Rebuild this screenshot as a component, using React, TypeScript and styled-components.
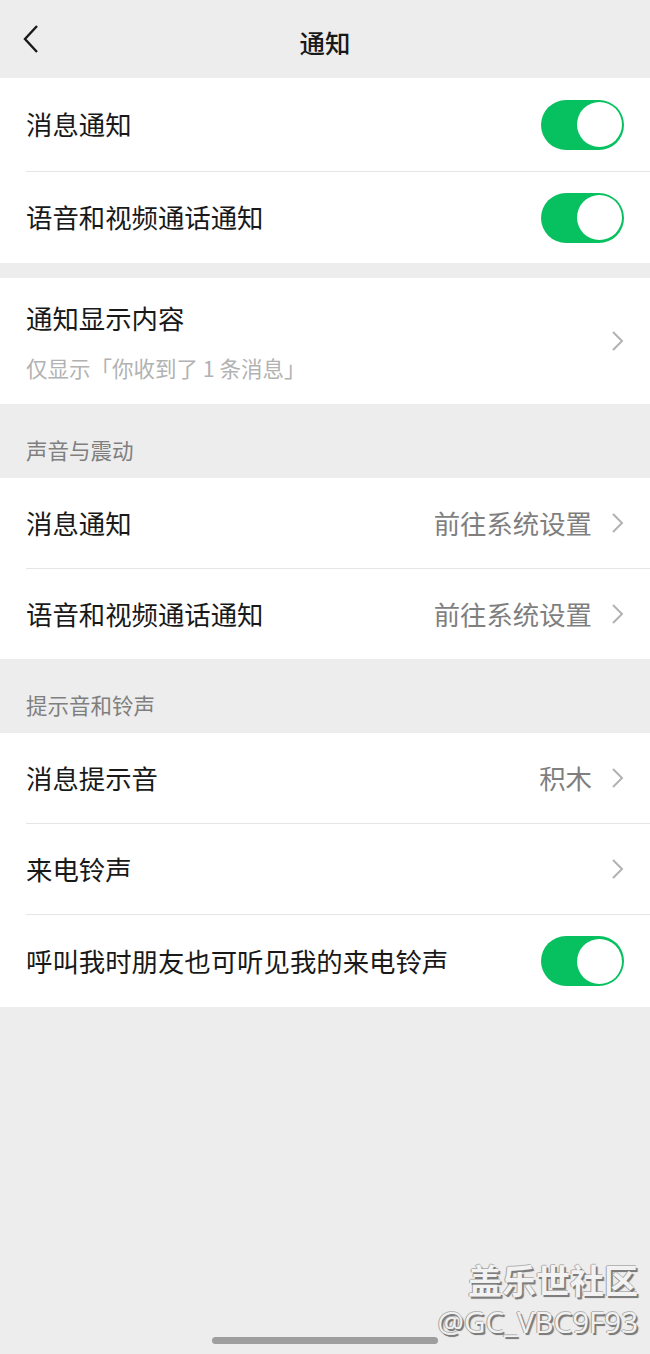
import React from "react";
import styled, { createGlobalStyle } from "styled-components";

const GlobalStyle = createGlobalStyle`
  html, body {
    margin: 0;
    padding: 0;
    background: #ededed;
  }
  body {
    font-family: "Noto Sans CJK SC", "Noto Sans", sans-serif;
    -webkit-font-smoothing: antialiased;
  }
`;

const Page = styled.div`
  position: relative;
  width: 650px;
  height: 1354px;
  background: #ededed;
  display: flex;
  flex-direction: column;
  overflow: hidden;
`;

const NavBar = styled.div`
  height: 78px;
  flex-shrink: 0;
  display: grid;
  grid-template-columns: 80px 1fr 80px;
  align-items: center;
`;

const BackButton = styled.div`
  display: flex;
  align-items: center;
  padding-left: 22px;
  height: 100%;
`;

const NavTitle = styled.div`
  text-align: center;
  font-size: 25.5px;
  font-weight: 500;
  color: #191919;
  padding-top: 4px;
`;

const Card = styled.div<{ $mt?: number }>`
  background: #ffffff;
  margin-top: ${(p) => p.$mt ?? 0}px;
  display: flex;
  flex-direction: column;
`;

const Row = styled.div<{ $h: number }>`
  height: ${(p) => p.$h}px;
  display: flex;
  align-items: center;
  padding: 0 26px;
  box-sizing: border-box;
`;

const Divider = styled.div`
  height: 1px;
  background: #e6e6e6;
  margin-left: 26px;
`;

const Label = styled.div`
  flex: 1;
  font-size: 26.4px;
  color: #191919;
  line-height: 1;
`;

const Value = styled.div`
  font-size: 26.4px;
  color: #7f7f7f;
  line-height: 1;
  margin-right: 16px;
`;

const TextStack = styled.div`
  flex: 1;
  display: flex;
  flex-direction: column;
  gap: 26px;
  padding-top: 2px;
`;

const SubLabel = styled.div`
  font-size: 21.5px;
  color: #b2b2b2;
  line-height: 1;
`;

const SectionHeader = styled.div`
  height: 74px;
  box-sizing: border-box;
  padding: 35px 26px 0;
  font-size: 21.5px;
  color: #7f7f7f;
  line-height: 1;
`;

const Switch = styled.div<{ $on: boolean }>`
  position: relative;
  width: 83px;
  height: 50px;
  border-radius: 25px;
  background: ${(p) => (p.$on ? "#07c160" : "#e5e5e5")};
  flex-shrink: 0;
`;

const Knob = styled.div<{ $on: boolean }>`
  position: absolute;
  top: 2.5px;
  ${(p) => (p.$on ? "right: 2px;" : "left: 2px;")}
  width: 45px;
  height: 45px;
  border-radius: 50%;
  background: #ffffff;
`;

const ChevronBox = styled.div`
  width: 16px;
  display: flex;
  align-items: center;
  justify-content: flex-end;
  flex-shrink: 0;
`;

const Watermark = styled.div`
  position: absolute;
  right: 12px;
  bottom: 18px;
  display: flex;
  flex-direction: column;
  align-items: flex-end;
  color: #f2f2f2;
  text-shadow: 1.5px 1.5px 0 #7d7d7d, -1px 0 0 #a5a5a5, 0 -1px 0 #b5b5b5, 2px 2px 1px #8f8f8f;
  line-height: 1;
`;

const WatermarkTitle = styled.div`
  font-size: 34px;
  font-weight: 700;
  margin-bottom: 10px;
`;

const WatermarkId = styled.div`
  font-family: "Open Sans", "Noto Sans", sans-serif;
  font-size: 29.5px;
`;

const HomeIndicator = styled.div`
  position: absolute;
  left: 212px;
  bottom: 10px;
  width: 226px;
  height: 7px;
  border-radius: 4px;
  background: #9e9e9e;
`;

const Chevron = () => (
  <ChevronBox>
    <svg width="14" height="22" viewBox="0 0 14 22">
      <path d="M3 2 L12 11 L3 20" fill="none" stroke="#b2b2b2" strokeWidth="2" />
    </svg>
  </ChevronBox>
);

const Toggle = ({ on = true }: { on?: boolean }) => (
  <Switch $on={on}>
    <Knob $on={on} />
  </Switch>
);

export default function App() {
  return (
    <Page>
      <GlobalStyle />
      <NavBar>
        <BackButton>
          <svg width="18" height="30" viewBox="0 0 18 30">
            <path d="M15 2 L3 15 L15 28" fill="none" stroke="#191919" strokeWidth="2.4" />
          </svg>
        </BackButton>
        <NavTitle>通知</NavTitle>
        <div />
      </NavBar>

      <Card>
        <Row $h={93}>
          <Label>消息通知</Label>
          <Toggle />
        </Row>
        <Divider />
        <Row $h={91}>
          <Label>语音和视频通话通知</Label>
          <Toggle />
        </Row>
      </Card>

      <Card $mt={15}>
        <Row $h={126}>
          <TextStack>
            <Label>通知显示内容</Label>
            <SubLabel>仅显示「你收到了 1 条消息」</SubLabel>
          </TextStack>
          <Chevron />
        </Row>
      </Card>

      <SectionHeader>声音与震动</SectionHeader>

      <Card>
        <Row $h={90}>
          <Label>消息通知</Label>
          <Value>前往系统设置</Value>
          <Chevron />
        </Row>
        <Divider />
        <Row $h={90}>
          <Label>语音和视频通话通知</Label>
          <Value>前往系统设置</Value>
          <Chevron />
        </Row>
      </Card>

      <SectionHeader>提示音和铃声</SectionHeader>

      <Card>
        <Row $h={90}>
          <Label>消息提示音</Label>
          <Value>积木</Value>
          <Chevron />
        </Row>
        <Divider />
        <Row $h={90}>
          <Label>来电铃声</Label>
          <Chevron />
        </Row>
        <Divider />
        <Row $h={92}>
          <Label>呼叫我时朋友也可听见我的来电铃声</Label>
          <Toggle />
        </Row>
      </Card>

      <Watermark>
        <WatermarkTitle>盖乐世社区</WatermarkTitle>
        <WatermarkId>@GC_VBC9F93</WatermarkId>
      </Watermark>
      <HomeIndicator />
    </Page>
  );
}
